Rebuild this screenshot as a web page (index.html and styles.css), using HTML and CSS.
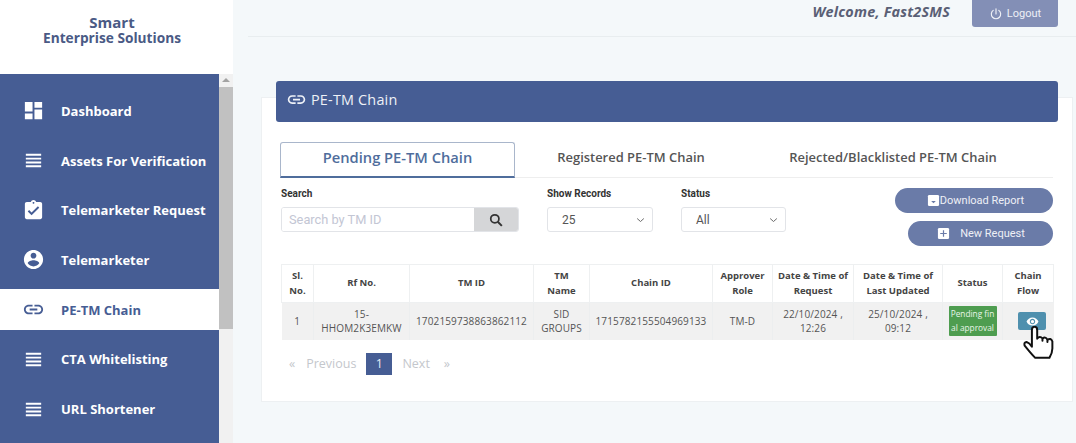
FILE: index.html
```html
<!DOCTYPE html>
<html lang="en">
<head>
<meta charset="utf-8">
<title>PE-TM Chain</title>
<link rel="stylesheet" href="styles.css">
</head>
<body>
<svg class="defs" width="0" height="0">
  <defs>
    <symbol id="i-dash" viewBox="0 0 24 24"><path d="M3 13h8V3H3v10zm0 8h8v-6H3v6zm10 0h8V11h-8v10zm0-18v6h8V3h-8z"/></symbol>
    <symbol id="i-list" viewBox="0 0 24 24"><path d="M4 15h16v-2H4v2zm0 4h16v-2H4v2zm0-8h16V9H4v2zm0-6v2h16V5H4z"/></symbol>
    <symbol id="i-task" viewBox="0 0 24 24"><path d="M19 3h-4.18C14.4 1.84 13.3 1 12 1s-2.4.84-2.82 2H5c-1.1 0-2 .9-2 2v14c0 1.1.9 2 2 2h14c1.1 0 2-.9 2-2V5c0-1.1-.9-2-2-2zm-7 0c.55 0 1 .45 1 1s-.45 1-1 1-1-.45-1-1 .45-1 1-1zm-2 14-4-4 1.41-1.41L10 14.17l6.59-6.59L18 9l-8 8z"/></symbol>
    <symbol id="i-user" viewBox="0 0 24 24"><path d="M12 2C6.48 2 2 6.48 2 12s4.48 10 10 10 10-4.48 10-10S17.52 2 12 2zm0 3c1.66 0 3 1.34 3 3s-1.34 3-3 3-3-1.34-3-3 1.34-3 3-3zm0 14.2c-2.5 0-4.71-1.28-6-3.22.03-1.99 4-3.08 6-3.08 1.99 0 5.97 1.09 6 3.08-1.29 1.94-3.5 3.22-6 3.22z"/></symbol>
    <symbol id="i-link" viewBox="0 0 24 24"><path d="M3.9 12c0-1.71 1.39-3.1 3.1-3.1h4V7H7c-2.76 0-5 2.24-5 5s2.24 5 5 5h4v-1.9H7c-1.71 0-3.1-1.39-3.1-3.1zM8 13h8v-2H8v2zm9-6h-4v1.9h4c1.71 0 3.1 1.39 3.1 3.1s-1.39 3.1-3.1 3.1h-4V17h4c2.76 0 5-2.24 5-5s-2.24-5-5-5z"/></symbol>
    <symbol id="i-chev" viewBox="0 0 12 8"><path d="M1.5 2 6 6l4.5-4" fill="none" stroke="currentColor" stroke-width="1.3"/></symbol>
  </defs>
</svg>
<div class="app">
  <aside class="sidebar">
    <div class="logo"><span class="logo-top">Smart</span><span class="logo-sub">Enterprise Solutions</span></div>
    <div class="side-body">
      <nav class="nav">
        <a class="nav-item"><svg class="nav-icon"><use href="#i-dash"/></svg>Dashboard</a>
        <a class="nav-item"><svg class="nav-icon"><use href="#i-list"/></svg>Assets For Verification</a>
        <a class="nav-item"><svg class="nav-icon"><use href="#i-task"/></svg>Telemarketer Request</a>
        <a class="nav-item"><svg class="nav-icon"><use href="#i-user"/></svg>Telemarketer</a>
        <a class="nav-item active"><svg class="nav-icon"><use href="#i-link"/></svg>PE-TM Chain</a>
        <a class="nav-item"><svg class="nav-icon"><use href="#i-list"/></svg>CTA Whitelisting</a>
        <a class="nav-item"><svg class="nav-icon"><use href="#i-list"/></svg>URL Shortener</a>
      </nav>
      <div class="scrollbar">
        <div class="scroll-arrow"></div>
        <div class="scroll-thumb"></div>
      </div>
    </div>
  </aside>
  <main class="main">
    <header class="topbar">
      <span class="welcome">Welcome, Fast2SMS</span>
      <button class="logout">
        <svg class="logout-icon" viewBox="0 0 24 24"><path d="M12 3v9M7.2 5.8a8 8 0 1 0 9.6 0" fill="none" stroke="currentColor" stroke-width="2" stroke-linecap="round"/></svg>
        Logout
      </button>
    </header>
    <section class="card">
      <div class="card-head"><svg class="head-icon"><use href="#i-link"/></svg>PE-TM Chain</div>
      <div class="tabs">
        <div class="tab current">Pending PE-TM Chain</div>
        <div class="tab t2">Registered PE-TM Chain</div>
        <div class="tab t3">Rejected/Blacklisted PE-TM Chain</div>
      </div>
      <div class="filters">
        <div class="field f-search">
          <label class="lbl">Search</label>
          <div class="search">
            <input class="search-input" placeholder="Search by TM ID">
            <button class="search-btn"><svg class="search-icon" viewBox="0 0 24 24"><circle cx="10" cy="10" r="7" fill="none" stroke="currentColor" stroke-width="3"/><path d="m15 15 7 7" stroke="currentColor" stroke-width="3.4"/></svg></button>
          </div>
        </div>
        <div class="field f-show">
          <label class="lbl">Show Records</label>
          <div class="select"><span>25</span><svg class="chev"><use href="#i-chev"/></svg></div>
        </div>
        <div class="field f-status">
          <label class="lbl">Status</label>
          <div class="select"><span>All</span><svg class="chev"><use href="#i-chev"/></svg></div>
        </div>
        <div class="actions">
          <button class="pill p-dl"><svg class="pill-icon" viewBox="0 0 14 14"><rect x="1" y="1" width="12" height="12" rx="1.5" fill="#fff"/><path d="M4.5 7.5h5L7 10z" fill="#6a7ba8"/></svg>Download Report</button>
          <button class="pill p-new"><svg class="pill-icon" viewBox="0 0 14 14"><rect x="1" y="1" width="12" height="12" rx="1.5" fill="#fff"/><path d="M7 3.5v7M3.5 7h7" stroke="#6a7ba8" stroke-width="1.3"/></svg>New Request</button>
        </div>
      </div>
      <table class="grid">
        <colgroup>
          <col class="c1"><col class="c2"><col class="c3"><col class="c4"><col class="c5">
          <col class="c6"><col class="c7"><col class="c8"><col class="c9"><col class="c10">
        </colgroup>
        <thead>
          <tr>
            <th>Sl.<br>No.</th><th>Rf No.</th><th>TM ID</th><th>TM<br>Name</th><th>Chain ID</th>
            <th>Approver<br>Role</th><th>Date &amp; Time of<br>Request</th><th>Date &amp; Time of<br>Last Updated</th><th>Status</th><th>Chain<br>Flow</th>
          </tr>
        </thead>
        <tbody>
          <tr>
            <td>1</td><td>15-<br>HHOM2K3EMKW</td><td>1702159738863862112</td><td>SID<br>GROUPS</td><td>1715782155504969133</td>
            <td>TM-D</td><td>22/10/2024 ,<br>12:26</td><td>25/10/2024 ,<br>09:12</td>
            <td><span class="badge">Pending final approval</span></td>
            <td class="flow">
              <button class="eye"><svg class="eye-icon" viewBox="0 0 24 24"><path fill="#fff" d="M12 4.5C7 4.5 2.73 7.61 1 12c1.73 4.39 6 7.5 11 7.5s9.27-3.11 11-7.5c-1.73-4.39-6-7.5-11-7.5zM12 17c-2.76 0-5-2.24-5-5s2.24-5 5-5 5 2.24 5 5-2.24 5-5 5zm0-8c-1.66 0-3 1.34-3 3s1.34 3 3 3 3-1.34 3-3-1.34-3-3-3z"/></svg></button>
              <svg class="hand" viewBox="245 90 100 105"><path d="M272 150V102Q272 92 280 92Q288 92 288 102V128Q296 118 304 127V134V128Q313 120 319 131V138V132Q329 124 334 136V158Q334 172 325 186H282Q272 176 263 165L250 149Q247 139 256 138Q264 140 272 152Z" fill="#fff" stroke="#111" stroke-width="6" stroke-linejoin="round"/></svg>
            </td>
          </tr>
        </tbody>
      </table>
      <div class="pager">
        <span class="pg arrow-l">«</span><span class="pg prev">Previous</span><span class="pg-cur">1</span><span class="pg next">Next</span><span class="pg arrow-r">»</span>
      </div>
    </section>
  </main>
</div>
</body>
</html>
```

FILE: styles.css
```css
* { box-sizing: border-box; }
html, body { margin: 0; height: 443px; overflow: hidden; }
body { font-family: "Open Sans", sans-serif; background: #f4f8fa; color: #444; }
.defs { display: block; height: 0; }
.app { display: flex; height: 443px; }

.sidebar { width: 233px; flex: none; display: flex; flex-direction: column; background: #fff; }
.logo { height: 74px; padding: 14px 9px 0 0; display: flex; flex-direction: column; align-items: center; color: #4a5a85; font-weight: 700; }
.logo-top { font-size: 15px; line-height: 16px; }
.logo-sub { font-size: 13.7px; line-height: 15px; }
.side-body { flex: 1; display: flex; min-height: 0; }
.nav { width: 219px; background: #465d94; padding-top: 16.4px; display: flex; flex-direction: column; gap: 8.7px; }
.nav-item { height: 41px; display: flex; align-items: center; gap: 16px; padding-left: 22px; color: #fff; font-weight: 700; font-size: 13px; white-space: nowrap; }
.nav-item.active { background: #fff; color: #465d94; }
.nav-icon { width: 23px; height: 23px; fill: currentColor; flex: none; }
.scrollbar { width: 14px; background: #f1f1f1; display: flex; flex-direction: column; }
.scroll-arrow { height: 13px; position: relative; }
.scroll-arrow::after { content: ""; position: absolute; left: 3px; top: 4px; border: 4px solid transparent; border-top: 0; border-bottom: 4px solid #a3a3a3; }
.scroll-thumb { height: 242px; background: #c1c1c1; }

.main { flex: 1; min-width: 0; }
.topbar { height: 37px; margin-left: 15px; border-bottom: 1px solid #e8edef; display: flex; justify-content: flex-end; align-items: flex-start; padding-right: 18px; }
.welcome { font-weight: 700; font-style: italic; font-size: 14.4px; color: #5a5f75; margin: 2px 22px 0 0; letter-spacing: .2px; }
.logout { width: 86px; height: 27px; border: 0; border-radius: 0 0 3px 3px; background: #838fb6; color: #eef0f6; font: 11px Roboto, sans-serif; display: flex; align-items: center; justify-content: center; gap: 4px; padding: 0; }
.logout-icon { width: 14px; height: 14px; }

.card { margin: 60px 3px 0 28px; height: 305px; background: #fff; border: 1px solid #edf0f2; padding: 0 19px; }
.card-head { height: 41px; margin: -17px -5px 0; background: #465d94; border-radius: 3px; color: #eef1f7; display: flex; align-items: center; padding: 0 0 5px 10px; gap: 4px; font-size: 14.4px; letter-spacing: .2px; }
.head-icon { width: 21px; height: 21px; fill: currentColor; }

.tabs { margin-top: 20px; height: 36px; border-bottom: 1px solid #eee; display: flex; }
.tab { font-size: 12.95px; font-weight: 600; color: #555; display: flex; align-items: center; justify-content: center; height: 36px; padding-bottom: 6px; }
.tab.current { width: 235px; margin-left: -1px; font-size: 14.7px; color: #4f6d9c; border: 1px solid #a9b6cb; border-bottom: 2px solid #4f6d9c; border-radius: 3px 3px 0 0; padding-bottom: 5px; }
.tab.t2 { width: 232px; }
.tab.t3 { width: 292px; }

.filters { margin-top: 10px; display: flex; align-items: flex-start; }
.field { display: flex; flex-direction: column; }
.lbl { font: 700 10px/12px Roboto, sans-serif; color: #333; margin-bottom: 7px; }
.f-search { width: 238px; margin-right: 28px; }
.f-show { width: 106px; margin-right: 28px; }
.f-status { width: 105px; }
.search { display: flex; height: 25px; border-radius: 3px; overflow: hidden; border: 1px solid #e2e4e8; }
.search-input { flex: 1; min-width: 0; border: 0; padding: 0 7px; font: 12.8px Roboto, sans-serif; background: #fff; outline: 0; }
.search-input::placeholder { color: #c3c6d4; }
.search-btn { width: 44px; border: 0; background: #d5d6d8; display: flex; align-items: center; justify-content: center; color: #333; padding: 0; }
.search-icon { width: 14px; height: 14px; }
.select { height: 25px; border: 1px solid #e2e4e8; border-radius: 3px; padding: 0 7px 0 14px; display: flex; align-items: center; justify-content: space-between; font: 12px Roboto, sans-serif; color: #555; background: #fff; }
.chev { width: 9px; height: 6px; color: #666; }

.actions { margin-left: auto; display: flex; flex-direction: column; align-items: flex-end; gap: 8px; }
.pill { height: 25px; border: 0; border-radius: 13px; background: #6a7ba8; color: #eef0f6; font: 11px Roboto, sans-serif; display: flex; align-items: center; justify-content: center; padding: 0; }
.p-dl { width: 158px; padding-left: 3px; }
.p-new { width: 145px; gap: 10px; padding-left: 1px; }
.pill-icon { width: 13px; height: 13px; }

.grid { margin-top: 18px; width: 772px; table-layout: fixed; border-collapse: collapse; }
.c1 { width: 32px; } .c2 { width: 96px; } .c3 { width: 124px; } .c4 { width: 56px; } .c5 { width: 123px; }
.c6 { width: 60px; } .c7 { width: 81px; } .c8 { width: 89px; } .c9 { width: 60px; } .c10 { width: 51px; }
.grid th { height: 38px; padding: 0; font-size: 9.5px; line-height: 14.5px; font-weight: 700; color: #444; border: 1px solid #eef0f1; text-align: center; }
.grid td { height: 37px; padding: 0; font-size: 10px; line-height: 14px; font-weight: 400; color: #555; background: #f1f1f1; text-align: center; white-space: nowrap; letter-spacing: .12px; }
.grid td:nth-child(n+2) { border-left: 1px solid #eceeef; }
.badge { display: block; width: 48px; height: 30px; margin: 0 auto; padding: 1px 0; background: #4e9d50; color: #e8f5e8; font-size: 8.3px; line-height: 14px; letter-spacing: 0; white-space: normal; word-break: break-all; border-radius: 1px; }
.flow { position: relative; }
.eye { display: flex; align-items: center; justify-content: center; width: 28px; height: 18px; margin: 0 0 0 15px; border: 0; border-radius: 2px; background: #4f90ae; padding: 0; }
.eye-icon { width: 13px; height: 13px; }
.hand { position: absolute; left: 20px; top: 23px; width: 33px; height: 35px; }

.pager { margin-top: 13px; height: 22px; display: flex; align-items: center; font-size: 12.5px; color: #c4c7cc; }
.pg.arrow-l { margin-left: 8px; margin-right: 11px; }
.pg.prev { margin-right: 10px; }
.pg-cur { width: 26px; height: 22px; background: #465d94; color: #e8ecf4; display: flex; align-items: center; justify-content: center; }
.pg.next { margin-left: 10px; margin-right: 14px; }
```
